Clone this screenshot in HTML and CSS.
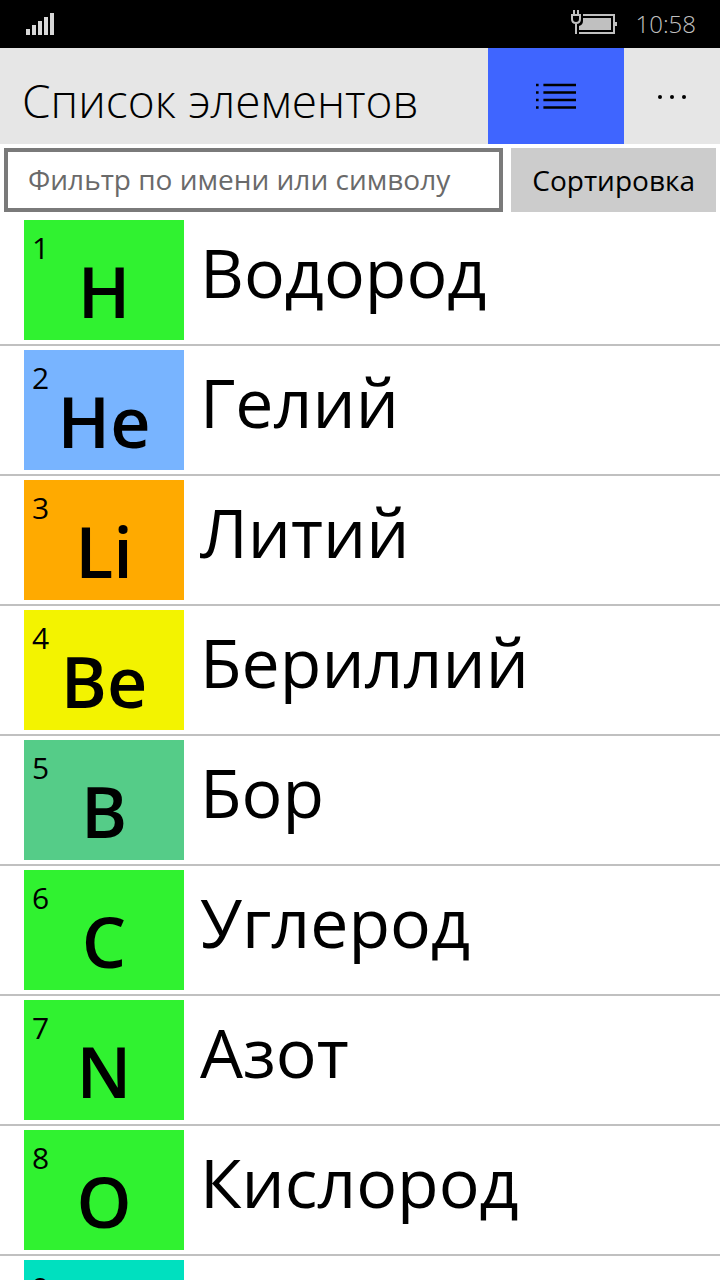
FILE: index.html
```html
<!DOCTYPE html>
<html lang="ru">
<head>
<meta charset="utf-8">
<meta name="viewport" content="width=device-width, initial-scale=1">
<title>Список элементов</title>
<link rel="stylesheet" href="styles.css">
</head>
<body>
<div class="screen">
  <div class="status">
    <svg class="signal" width="28" height="22" viewBox="0 0 28 22" fill="#d8d8d8" aria-hidden="true" shape-rendering="crispEdges"><path d="M0 16h4v6H0zM6 12h4v10H6zM12 8h4v14h-4zM18 4h4v18h-4zM24 0h4v22h-4z"/></svg>
    <svg class="battery" width="46" height="24" viewBox="0 0 46 24" aria-hidden="true">
      <path d="M12 5H43V23H8" fill="none" stroke="#c0c0c0" stroke-width="2"/>
      <path d="M44 12h2v4h-2z" fill="#c0c0c0"/>
      <path d="M12 8H40V20H8V16Q12 15 12 11Z" fill="#c0c0c0"/>
      <path d="M3 0V5M7 0V5M0 5H10M1 5V9Q1 13 5 13Q9 13 9 9V5M5 13V24" fill="none" stroke="#c0c0c0" stroke-width="2"/>
    </svg>
    <time class="clock">10:58</time>
  </div>
  <header class="header">
    <h1 class="title">Список элементов</h1>
    <button class="view" type="button" aria-label="Список">
      <svg width="40" height="26" viewBox="0 0 40 26" fill="none" stroke="#000" stroke-width="2.4" aria-hidden="true"><path d="M0 2H2.6M7.4 2H40M0 9.5H2.6M7.4 9.5H40M0 17H2.6M7.4 17H40M0 24.5H2.6M7.4 24.5H40"/></svg>
    </button>
    <button class="more" type="button" aria-label="Ещё">
      <svg width="28" height="4" viewBox="0 0 28 4" aria-hidden="true"><circle cx="2" cy="2" r="2"/><circle cx="14" cy="2" r="2"/><circle cx="26" cy="2" r="2"/></svg>
    </button>
  </header>
  <main class="content">
    <form class="tools">
      <input class="filter" type="text" placeholder="Фильтр по имени или символу" aria-label="Фильтр по имени или символу">
      <button class="sort" type="button">Сортировка</button>
    </form>
    <ul class="list">
      <li class="row"><div class="tile nonmetal"><span class="number">1</span><span class="symbol">H</span></div><span class="name">Водород</span></li>
      <li class="row"><div class="tile noble"><span class="number">2</span><span class="symbol">He</span></div><span class="name">Гелий</span></li>
      <li class="row"><div class="tile alkali"><span class="number">3</span><span class="symbol">Li</span></div><span class="name">Литий</span></li>
      <li class="row"><div class="tile earth"><span class="number">4</span><span class="symbol">Be</span></div><span class="name">Бериллий</span></li>
      <li class="row"><div class="tile metalloid"><span class="number">5</span><span class="symbol">B</span></div><span class="name">Бор</span></li>
      <li class="row"><div class="tile nonmetal"><span class="number">6</span><span class="symbol">C</span></div><span class="name">Углерод</span></li>
      <li class="row"><div class="tile nonmetal"><span class="number">7</span><span class="symbol">N</span></div><span class="name">Азот</span></li>
      <li class="row"><div class="tile nonmetal"><span class="number">8</span><span class="symbol">O</span></div><span class="name">Кислород</span></li>
      <li class="row"><div class="tile halogen"><span class="number">9</span><span class="symbol">F</span></div><span class="name">Фтор</span></li>
    </ul>
  </main>
</div>
</body>
</html>
```
FILE: styles.css
```css
* { box-sizing: border-box; }
body {
  margin: 0;
  background: #fff;
  color: #000;
  font-family: "Open Sans", "Noto Sans", sans-serif;
}
button, input { font: inherit; color: inherit; margin: 0; border: 0; border-radius: 0; }
.screen { display: flex; flex-direction: column; height: 100vh; overflow: hidden; }
.status {
  display: flex;
  flex: none;
  align-items: center;
  height: 48px;
  padding: 0 24px 0 26px;
  background: #000;
  color: #c0c0c0;
}
.battery { margin-left: auto; margin-right: 18px; margin-bottom: 4px; }
.clock { font-size: 24px; font-weight: 300; line-height: 48px; }
.header { display: flex; flex: none; height: 96px; background: #e6e6e6; }
.title {
  flex: 1;
  margin: 0;
  padding: 4px 0 0 22px;
  font-size: 46px;
  font-weight: 300;
  line-height: 96px;
  white-space: nowrap;
}
.view, .more { display: grid; place-items: center; padding: 0; }
.view { width: 136px; background: #3f65ff; }
.more { width: 96px; padding-top: 2px; background: transparent; }
.content { flex: 1; min-height: 0; overflow: hidden; }
.tools { display: flex; gap: 8px; padding: 4px; }
.filter {
  flex: 1;
  min-width: 0;
  height: 64px;
  padding: 0 20px 2px;
  border: 4px solid #7a7a7a;
  background: #fff;
  font-size: 28px;
}
.filter::placeholder { color: #6a6a6a; opacity: 1; }
.sort { height: 64px; padding: 0 21px; background: #ccc; font-size: 28px; white-space: nowrap; }
.list { margin: 0; padding: 0; list-style: none; }
.row {
  display: flex;
  gap: 16px;
  padding: 4px 24px;
  border-bottom: 2px solid #c0c0c0;
}
.tile { display: grid; flex: none; width: 160px; height: 120px; }
.number, .symbol { grid-area: 1 / 1; }
.number { padding: 8px; font-size: 30px; line-height: 40px; }
.symbol { font-size: 70px; font-weight: 600; line-height: 94px; padding-top: 24px; text-align: center; }
.name { font-size: 68px; line-height: 104px; }
.nonmetal { background: #30f230; }
.noble { background: #78b4ff; }
.alkali { background: #ffaa00; }
.earth { background: #f3f300; }
.metalloid { background: #55cc88; }
.halogen { background: #00e0bf; }
```
